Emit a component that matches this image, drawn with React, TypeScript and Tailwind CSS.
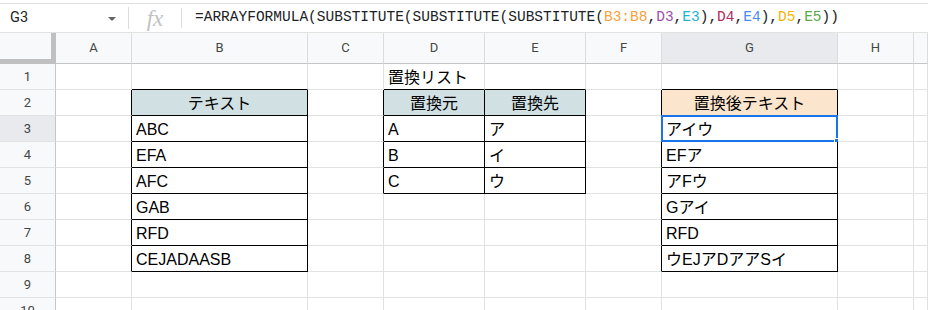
import React from "react";

const colLetters = ["A", "B", "C", "D", "E", "F", "G", "H", ""];

type Cell = { text?: string; head?: "blue" | "orange"; center?: boolean };

const data: Record<string, Cell> = {
  "1-3": { text: "置換リスト" },
  "2-1": { text: "テキスト", head: "blue", center: true },
  "2-3": { text: "置換元", head: "blue", center: true },
  "2-4": { text: "置換先", head: "blue", center: true },
  "2-6": { text: "置換後テキスト", head: "orange", center: true },
  "3-1": { text: "ABC" },
  "4-1": { text: "EFA" },
  "5-1": { text: "AFC" },
  "6-1": { text: "GAB" },
  "7-1": { text: "RFD" },
  "8-1": { text: "CEJADAASB" },
  "3-3": { text: "A" },
  "4-3": { text: "B" },
  "5-3": { text: "C" },
  "3-4": { text: "ア" },
  "4-4": { text: "イ" },
  "5-4": { text: "ウ" },
  "3-6": { text: "アイウ" },
  "4-6": { text: "EFア" },
  "5-6": { text: "アFウ" },
  "6-6": { text: "Gアイ" },
  "7-6": { text: "RFD" },
  "8-6": { text: "ウEJアDアアSイ" },
};

// cells that carry the black table outline
const inTable = (r: number, c: number) =>
  (c === 1 && r >= 2 && r <= 8) ||
  ((c === 3 || c === 4) && r >= 2 && r <= 5) ||
  (c === 6 && r >= 2 && r <= 8);

const rows = [1, 2, 3, 4, 5, 6, 7, 8, 9, 10];

function FormulaBar() {
  return (
    <div className="pt-[3px]">
      <div className="flex h-[30px] items-center border-y border-[#e1e3e1] bg-white">
        <div className="flex w-[128px] items-center justify-between pl-[10px] pr-[12px] text-[14.5px] text-[#202124] [font-family:Roboto,sans-serif]">
          <span>G3</span>
          <svg width="8" height="4" viewBox="0 0 8 4" className="mt-[2px]">
            <path d="M0 0h8L4 4z" fill="#5f6368" />
          </svg>
        </div>
        <div className="h-[22px] w-px bg-[#dadce0]" />
        <div className="flex w-[52px] justify-center text-[23px] italic leading-none text-[#c0c2c5] [font-family:'Liberation_Serif',serif]">
          fx
        </div>
        <div className="h-[20px] w-px bg-[#dadce0]" />
        <div className="pl-[13px] text-[14.5px] text-[#202124] [font-family:'Liberation_Mono',monospace] whitespace-nowrap">
          =ARRAYFORMULA(SUBSTITUTE(SUBSTITUTE(SUBSTITUTE(
          <span className="text-[#f6a13a]">B3:B8</span>,
          <span className="text-[#9c4fb0]">D3</span>,
          <span className="text-[#1fb2cf]">E3</span>),
          <span className="text-[#b5295a]">D4</span>,
          <span className="text-[#4a8af4]">E4</span>),
          <span className="text-[#f4b400]">D5</span>,
          <span className="text-[#5daa4a]">E5</span>))
        </div>
      </div>
    </div>
  );
}

function Grid() {
  return (
    <div className="grid grid-cols-[56px_76px_176px_76px_101px_101px_76px_176px_76px_1fr] grid-rows-[31px_repeat(10,26px)] text-[#202124]">
      {/* column header row */}
      <div className="border-r-[5px] border-b-[5px] border-[#c0c0c0] bg-[#f8f9fa]" />
      {colLetters.map((l, i) => (
        <div
          key={l + i}
          className={
            "flex items-center justify-center border-r border-b border-r-[#dadce0] border-b-[#c4c7c5] text-[13px] text-[#444746] [font-family:Roboto,sans-serif] " +
            (l === "G" ? "bg-[#e8eaed]" : "bg-[#f8f9fa]")
          }
        >
          {l}
        </div>
      ))}

      {rows.map((r) => (
        <React.Fragment key={r}>
          <div
            className={
              "flex items-center justify-center border-r border-b border-r-[#c4c7c5] border-b-[#e1e3e1] text-[13px] text-[#444746] [font-family:Roboto,sans-serif] " +
              (r === 3 ? "bg-[#e8eaed]" : "bg-[#f8f9fa]")
            }
          >
            {r}
          </div>
          {colLetters.map((_, c) => {
            const cell = data[`${r}-${c}`];
            const blackR = inTable(r, c) || inTable(r, c + 1);
            const blackB = inTable(r, c) || inTable(r + 1, c);
            const selected = r === 3 && c === 6;
            return (
              <div
                key={c}
                className={
                  "relative flex whitespace-nowrap border-r border-b px-[4px] text-[16px] leading-[25px] [font-family:'Liberation_Sans','Noto_Sans_CJK_JP',sans-serif] " +
                  (blackR ? "border-r-black " : "border-r-[#e1e3e1] ") +
                  (blackB ? "border-b-black " : "border-b-[#e1e3e1] ") +
                  (cell?.center ? "justify-center " : "justify-start ") +
                  (cell?.head === "blue"
                    ? "bg-[#d0e0e3]"
                    : cell?.head === "orange"
                    ? "bg-[#fce5cd]"
                    : "bg-white")
                }
              >
                <span className="pt-[1px] text-black">{cell?.text}</span>
                {selected && (
                  <>
                    <div className="pointer-events-none absolute -top-px -left-px -right-px -bottom-px border-2 border-[#1a73e8]" />
                    <div className="absolute -right-[4px] -bottom-[4px] h-[7px] w-[7px] border border-white bg-[#1a73e8]" />
                  </>
                )}
              </div>
            );
          })}
        </React.Fragment>
      ))}
    </div>
  );
}

export default function App() {
  return (
    <div className="h-[310px] w-[928px] overflow-hidden bg-white">
      <FormulaBar />
      <Grid />
    </div>
  );
}
